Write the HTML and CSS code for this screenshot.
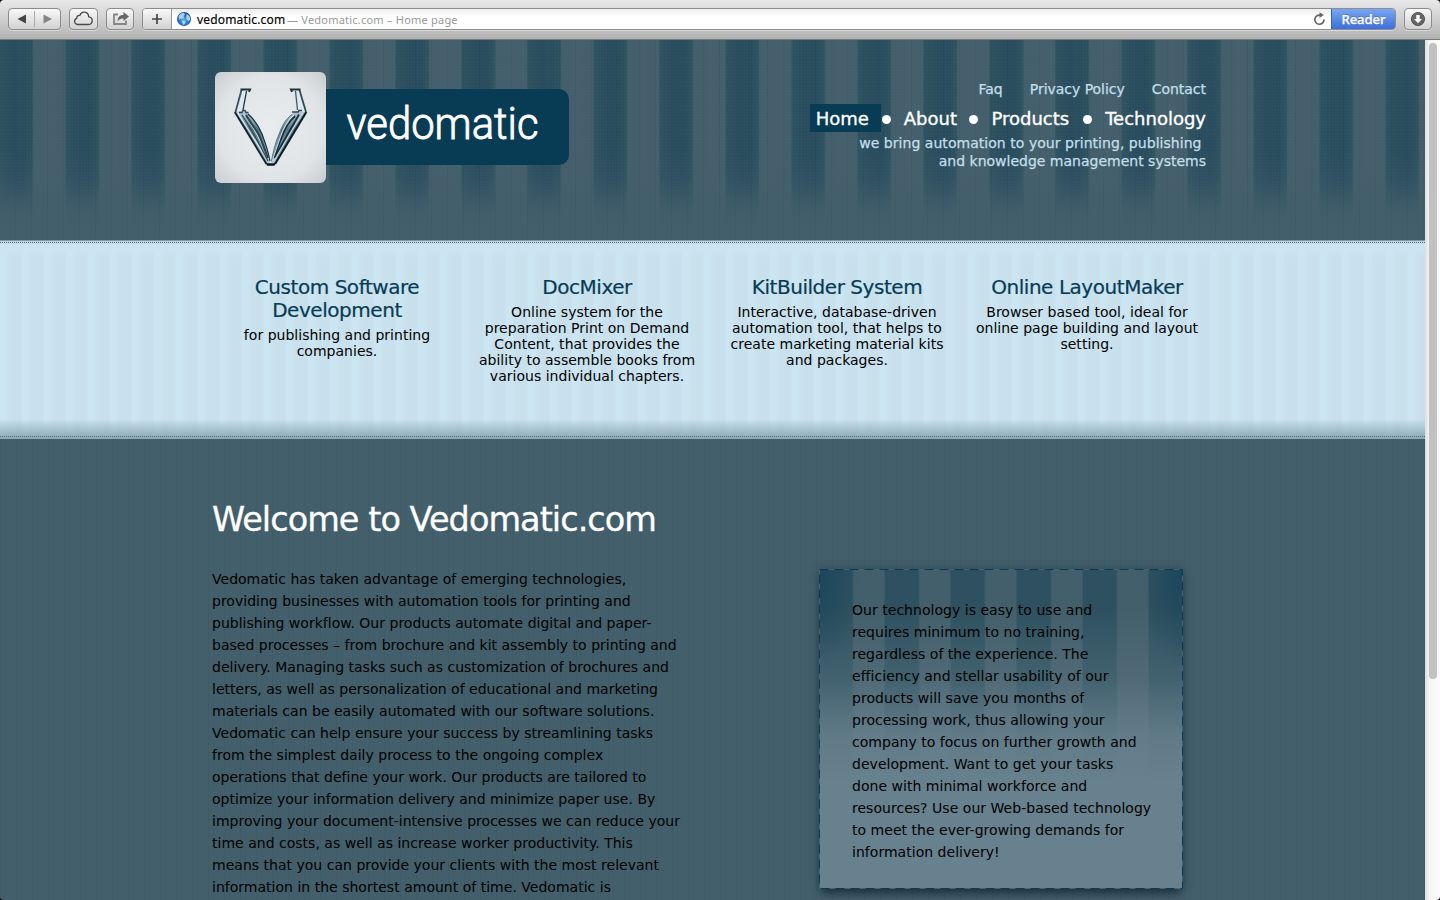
FILE: index.html
```html
<!DOCTYPE html>
<html lang="en">
<head>
<meta charset="utf-8">
<title>Vedomatic.com – Home page</title>
<link rel="stylesheet" href="styles.css">
</head>
<body>
<div class="browser">
  <div class="toolbar">
    <div class="btn nav-btn">
      <svg width="51" height="20" viewBox="0 0 51 20"><path d="M17 5.500v9L8.500 10z" fill="#444"/><path d="M34.500 5.500v9l8.500-4.500z" fill="#858585"/><path d="M25.500 2v16" stroke="#aaa"/></svg>
    </div>
    <div class="btn cloud-btn">
      <svg width="27" height="20" viewBox="0 0 27 20"><path d="M7.500 15.500a3.200 3.200 0 0 1-.8-6.200c0-2.300 1.600-3.200 3.200-2.900C10.800 3.700 12.700 3 14.500 3.200c2.700.3 4.100 2.200 4.200 4.600 1.900.2 3.600 1.800 3.500 4-.1 2.100-1.500 3.700-3.600 3.700z" fill="none" stroke="#4a4a4a" stroke-width="1.300"/></svg>
    </div>
    <div class="btn share-btn">
      <svg width="26" height="20" viewBox="0 0 26 20"><path d="M11 5.500H7v9.500h12v-3.500" fill="none" stroke="#858585" stroke-width="1.800"/><path d="M10.500 12.500c.2-4.800 2.500-6.500 6-6.500V3l5.500 4.600-5.500 4.500V9.400c-2.500-.1-4.600.6-6 3.100z" fill="#666"/></svg>
    </div>
    <div class="address">
      <div class="plus"><svg width="28" height="20" viewBox="0 0 28 20"><path d="M14 5v10M9 10h10" stroke="#444" stroke-width="1.700"/></svg></div>
      <div class="field">
        <svg class="globe" width="16" height="16" viewBox="0 0 16 16"><defs><radialGradient id="g" cx=".5" cy=".6"><stop offset="0" stop-color="#5fb9f2"/><stop offset="1" stop-color="#174fa9"/></radialGradient></defs><circle cx="8" cy="8" r="7" fill="url(#g)"/><path d="M2.500 5C4 2.500 6 1.800 8 1.700L9 3.500 7.500 5 8 6.500 6 8 4.500 7.500 3 9zM10.500 3l3 2 .8 4-2 1-2-2.500zM6 9.500l3.500 1L8.500 13l-1.500 1z" fill="#d8f0fb" opacity=".75"/></svg>
        <span class="url">vedomatic.com</span><span class="page-title">— Vedomatic.com – Home page</span>
        <svg class="reload" width="14" height="14" viewBox="0 0 14 14"><path d="M12 7.500A4.600 4.600 0 1 1 8 3.100" fill="none" stroke="#666" stroke-width="1.700"/><path d="M7.500 .3v5.600l4.300-2.800z" fill="#666"/></svg>
      </div>
      <div class="reader">Reader</div>
    </div>
    <div class="btn down-btn">
      <svg width="26" height="20" viewBox="0 0 26 20"><circle cx="13" cy="10" r="6.600" fill="#666" stroke="#444" stroke-width=".8"/><path d="M11.300 6h3.400v4H17l-4 4.300L9 10h2.300z" fill="#fff"/></svg>
    </div>
  </div>
  <div class="viewport">
    <div class="page">
      <header class="header">
        <div class="wrap header-row">
          <div class="brand">
            <svg class="mark" width="111" height="111" viewBox="0 0 111 111">
              <defs>
                <radialGradient id="paper" r=".72"><stop offset="0" stop-color="#e8ecee"/><stop offset=".65" stop-color="#e0e4e6"/><stop offset="1" stop-color="#c8cbce"/></radialGradient>
                <linearGradient id="leaf" x1="0" y1="0" x2="0" y2="1"><stop offset="0" stop-color="#b9cbd4"/><stop offset=".35" stop-color="#5b7886"/><stop offset=".7" stop-color="#7f9daa"/><stop offset="1" stop-color="#b3cad5"/></linearGradient>
              </defs>
              <rect width="111" height="111" rx="6" fill="url(#paper)"/>
              <path d="M25.500 17.500h6L28 38l-8 3z" fill="#dfe8ec"/>
              <path d="M20 40l8-1 5 2c7 6 11 13 14 20 3 8 6 17 8.500 29l-4 2z" fill="url(#leaf)"/>
              <path d="M26.500 18 20.500 40" fill="none" stroke="#3a5361" stroke-width="1.800"/>
              <path d="M31.500 19 28 38" fill="none" stroke="#1c3541" stroke-width="1.300"/>
              <path d="M25.500 17.500h9.500l-1 2.300" fill="none" stroke="#1d323d" stroke-width="2"/>
              <path d="M19.800 40 51.500 92" fill="none" stroke="#10242f" stroke-width="1.900"/>
              <path d="M22.500 40.500 53 89" fill="none" stroke="#dbe7ec" stroke-width="1.300"/>
              <path d="M27 43c10 15 18 30 26 46" fill="none" stroke="#29434f" stroke-width="1.200"/>
              <path d="M28.500 42c10 13 18 28 25 45" fill="none" stroke="#d3e1e7" stroke-width="1"/>
              <path d="M31 43c5 9 11 15 14 22l8 21" fill="none" stroke="#29434f" stroke-width="2"/>
              <path d="M33 42c7 6 11 13 14 20 3 8 6 16 8 27" fill="none" stroke="#192f3a" stroke-width="1.100"/>
              <path d="M24 40.500h3l1-2h2l1 2h2.500" fill="none" stroke="#2c4653" stroke-width="1.500"/>
              <path d="M85 17.500h-5L82.500 38l-4 3 12.500-1z" fill="#dfe8ec"/>
              <path d="M91 40l-9-1-5 3c-7 6-10 12-12.500 19-3.500 8-6 17-8.500 29l4 2z" fill="url(#leaf)"/>
              <path d="M84.500 18 91 40" fill="none" stroke="#2b4553" stroke-width="1.700"/>
              <path d="M80.500 19 82.500 38" fill="none" stroke="#3d5865" stroke-width="1.300"/>
              <path d="M85.500 17.500H76l1 2.300" fill="none" stroke="#1d323d" stroke-width="2"/>
              <path d="M91.300 40 60 92" fill="none" stroke="#0c202a" stroke-width="2.200"/>
              <path d="M87.500 41 58.500 89" fill="none" stroke="#c8d9e1" stroke-width="1.300"/>
              <path d="M84 42.500 59 86" fill="none" stroke="#173039" stroke-width="1.700"/>
              <path d="M80 44c-6 4-11 14-14 22l-7 19" fill="none" stroke="#162c37" stroke-width="2.300"/>
              <path d="M79 43c-7 6-11 14-14 23l-8 23" fill="none" stroke="#cfdee5" stroke-width="1.100"/>
              <path d="M77 42.500c-7 5-10 12-12.500 18.500-3.500 8-6 17-8 28" fill="none" stroke="#5b7886" stroke-width="1"/>
              <path d="M87 38.500h-3l-1 1.500h-6" fill="none" stroke="#2c4653" stroke-width="1.400"/>
              <path d="M51 91.300h9.500l-1 2.500h-7.500z" fill="#07161f"/>
            </svg>
            <div class="wordmark"><svg width="243" height="76" viewBox="0 0 243 76"><text x="20.500" y="50" textLength="192" lengthAdjust="spacingAndGlyphs">vedomatic</text></svg></div>
          </div>
          <div class="menus">
            <div class="top-links"><span>Faq</span><span>Privacy Policy</span><span>Contact</span></div>
            <nav class="main-nav"><span class="current"><span>Home</span></span><i class="dot"></i><span>About</span><i class="dot"></i><span>Products</span><i class="dot"></i><span>Technology</span></nav>
            <p class="tagline"><span class="first">we bring automation to your printing, publishing&nbsp;</span><span>and knowledge management systems</span></p>
          </div>
        </div>
      </header>
      <section class="band">
        <div class="wrap features">
          <div class="feature"><h2>Custom Software<br>Development</h2><p>for publishing and printing<br>companies.</p></div>
          <div class="feature"><h2>DocMixer</h2><p>Online system for the<br>preparation Print on Demand<br>Content, that provides the<br>ability to assemble books from<br>various individual chapters.</p></div>
          <div class="feature"><h2>KitBuilder System</h2><p>Interactive, database-driven<br>automation tool, that helps to<br>create marketing material kits<br>and packages.</p></div>
          <div class="feature"><h2>Online LayoutMaker</h2><p>Browser based tool, ideal for<br>online page building and layout<br>setting.</p></div>
        </div>
      </section>
      <main class="main">
        <div class="wrap">
          <h1>Welcome to Vedomatic.com</h1>
          <div class="columns">
            <p class="copy intro">Vedomatic has taken advantage of emerging technologies,<br>providing businesses with automation tools for printing and<br>publishing workflow. Our products automate digital and paper-<br>based processes – from brochure and kit assembly to printing and<br>delivery. Managing tasks such as customization of brochures and<br>letters, as well as personalization of educational and marketing<br>materials can be easily automated with our software solutions.<br>Vedomatic can help ensure your success by streamlining tasks<br>from the simplest daily process to the ongoing complex<br>operations that define your work. Our products are tailored to<br>optimize your information delivery and minimize paper use. By<br>improving your document-intensive processes we can reduce your<br>time and costs, as well as increase worker productivity. This<br>means that you can provide your clients with the most relevant<br>information in the shortest amount of time. Vedomatic is</p>
            <aside class="callout">
              <svg class="dashes" width="364" height="320"><rect x=".5" y=".5" width="363" height="319" fill="none" stroke="#466370"/><rect x=".5" y=".5" width="363" height="319" fill="none" stroke="#0a3a55" stroke-dasharray="9 6"/></svg>
              <p class="copy">Our technology is easy to use and<br>requires minimum to no training,<br>regardless of the experience. The<br>efficiency and stellar usability of our<br>products will save you months of<br>processing work, thus allowing your<br>company to focus on further growth and<br>development. Want to get your tasks<br>done with minimal workforce and<br>resources? Use our Web-based technology<br>to meet the ever-growing demands for<br>information delivery!</p>
            </aside>
          </div>
        </div>
      </main>
    </div>
    <div class="scrollbar"><div class="thumb"></div></div>
  </div>
</div>
</body>
</html>
```
FILE: styles.css
```css
* { box-sizing: border-box; }
body { margin: 0; background: #000; font-family: Verdana, "DejaVu Sans", sans-serif; overflow: hidden; }
svg { display: block; flex: none; }
h1, h2, p { margin: 0; font-weight: normal; }
.browser { width: 1440px; height: 900px; border-radius: 4px; overflow: hidden; display: flex; flex-direction: column; }
.toolbar { height: 40px; flex: none; display: flex; align-items: flex-start; padding: 8px 8px 0; background: linear-gradient(#e8e8e8, #cfcfcf 50%, #b2b2b2); border-bottom: 1px solid #777; }
.btn { height: 22px; flex: none; border: 1px solid #8c8c8c; border-radius: 4px; background: linear-gradient(#f8f8f8, #d2d2d2); box-shadow: 0 1px 0 rgba(255,255,255,.4); }
.nav-btn { width: 53px; }
.cloud-btn { width: 29px; margin-left: 8px; }
.share-btn { width: 28px; margin-left: 8px; }
.down-btn { width: 28px; margin-left: 8px; }
.address { flex: 1; height: 22px; margin-left: 8px; display: flex; border: 1px solid #8c8c8c; border-radius: 4px; overflow: hidden; box-shadow: 0 1px 0 rgba(255,255,255,.4); }
.plus { width: 29px; border-right: 1px solid #999; background: linear-gradient(#f8f8f8, #d2d2d2); }
.field { flex: 1; display: flex; align-items: center; padding: 0 5px 0 4px; background: linear-gradient(#eee, #fff 40%); font-family: "Noto Sans", sans-serif; white-space: nowrap; }
.url { font-size: 12px; margin-left: 5px; width: 90px; color: #000; letter-spacing: .17px; -webkit-text-stroke: .15px #000; }
.page-title { font-size: 11px; color: #999; letter-spacing: .22px; }
.reload { margin-left: auto; }
.reader { width: 64px; background: linear-gradient(#7aa6f0, #3c6fd8); border-left: 1px solid #3b62b5; color: #fff; text-align: center; font: 500 13px/20px "Noto Sans", sans-serif; text-shadow: 0 -1px 0 rgba(20,50,130,.5); -webkit-text-stroke: .3px #fff; }
.viewport { flex: 1; min-height: 0; display: flex; }
.page { width: 1425px; flex: none; overflow: hidden; background: #435f6b; display: flex; flex-direction: column; }
.scrollbar { flex: 1; padding: 3px 3px 0 4px; background: linear-gradient(90deg, #ddd, #f4f4f4 4px, #fcfcfc); }
.thumb { width: 8px; height: 636px; border-radius: 4px; background: #c1c1c1; }
.wrap { width: 1000px; margin-left: 212px; }

/* Curtain stripes, fading out towards the foot of the header */
.header { height: 200px; flex: none; background:
  repeating-linear-gradient(90deg, transparent 0 15px, rgba(25,55,70,.1) 15px 16px),
  linear-gradient(transparent 110px, rgba(67,95,107,.2) 138px, rgba(67,95,107,.85) 170px, #435f6b 190px),
  repeating-linear-gradient(90deg, rgba(90,120,130,.05) 0 1px, transparent 1px 3px),
  repeating-linear-gradient(rgba(90,120,130,.05) 0 1px, transparent 1px 3px),
  linear-gradient(90deg, #2f525f 0, #294c5e 14px, #294c5e 24px, #2f525f 32px, #435f6b 34px, #455f6c 50px, #435f6b 65px, #2f525f 66px) 0 0 / 66px 100%; }
.header-row { display: flex; justify-content: space-between; padding: 32px 6px 0 3px; }
.brand { display: flex; align-items: flex-start; }
.wordmark { margin-top: 17px; width: 243px; height: 76px; border-radius: 0 10px 10px 0; background: #083b54; }
.wordmark text { font: 300 45px Roboto, sans-serif; fill: #fff; stroke: #fff; stroke-width: .9px; }
.menus { display: flex; flex-direction: column; align-items: flex-end; white-space: nowrap; }
.top-links { display: flex; gap: 27px; margin-top: 8px; font-size: 14px; line-height: 18px; color: #c3dfea; letter-spacing: -.03px; -webkit-text-stroke: .25px #c3dfea; }
.main-nav { display: flex; align-items: center; height: 28px; margin-top: 6px; font-size: 18px; line-height: 28px; color: #fff; -webkit-text-stroke: .35px #fff; }
.main-nav > span { padding-top: 1px; height: 28px; }
.main-nav > .current { width: 71px; padding-left: 6px; background: #083b54; }
.dot { width: 9px; height: 9px; margin: 3px 13px 0; border-radius: 50%; background: #fff; }
.main-nav > .current + .dot { margin-left: 1px; }
.main-nav > :nth-child(3) { margin-right: -.5px; }
.main-nav > :nth-child(5) { margin-right: 1px; }
.tagline { display: flex; flex-direction: column; align-items: flex-end; margin-top: 2px; font-size: 14px; line-height: 18px; color: #c3dfea; -webkit-text-stroke: .25px #c3dfea; }
.first { letter-spacing: .04px; }

.band { height: 199px; flex: none; border-top: 1px solid #7e9ba7; border-bottom: 2px solid #8fabb7; background:
  repeating-linear-gradient(90deg, #55717f 0 1px, transparent 1px 2px) 0 1px / 100% 1px no-repeat,
  repeating-linear-gradient(90deg, #55717f 0 1px, transparent 1px 2px) 0 195px / 100% 1px no-repeat,
  linear-gradient(#b8d2de 0, #cbe6f2 4px, #cbe6f2 8px, transparent 16px, transparent 178px, rgba(135,163,177,.85)),
  linear-gradient(90deg, #cbe6f2 0 6px, #c8e1ed 9px, #c8e0ec 20px, #cbe6f2 24px) 0 0 / 22px 100%; }
.features { display: flex; padding-top: 35px; }
.feature { width: 250px; text-align: center; white-space: nowrap; }
.feature h2 { font-size: 20px; line-height: 23px; letter-spacing: -.45px; color: #083b54; -webkit-text-stroke: .2px #083b54; }
.feature p { margin-top: 5px; font-size: 14px; line-height: 16px; letter-spacing: .02px; color: #000; }

.main { flex: 1; min-height: 0; background:
  repeating-linear-gradient(90deg, rgba(30,65,82,.13) 0 1px, transparent 1px 5px, rgba(30,65,82,.06) 5px 6px, transparent 6px 16px), #435f6b; }
h1 { padding-top: 61px; font-size: 33.500px; line-height: 40px; letter-spacing: -.96px; color: #fff; white-space: nowrap; -webkit-text-stroke: .3px #fff; }
.columns { display: flex; justify-content: space-between; align-items: flex-start; padding: 28px 29px 0 0; }
.copy { font-size: 14px; line-height: 22px; letter-spacing: .03px; color: #000; white-space: nowrap; }
.intro { letter-spacing: .015px; }
.callout { position: relative; width: 364px; height: 320px; margin-top: 1px; padding: 30px 33px; box-shadow: 0 7px 9px -3px #1c323d, 0 0 8px rgba(20,45,60,.4); background:
  radial-gradient(40px 100px at 0 0, rgba(18,65,91,.7), transparent),
  radial-gradient(40px 100px at 100% 0, rgba(18,65,91,.7), transparent),
  linear-gradient(transparent 40px, rgba(104,129,142,.35) 110px, rgba(104,129,142,.85) 165px, #68818e 215px),
  repeating-linear-gradient(90deg, #2f515f 0 33px, #435f6b 35px 65px, #2f515f 66px); }
.dashes { position: absolute; left: 0; top: 0; }
```
